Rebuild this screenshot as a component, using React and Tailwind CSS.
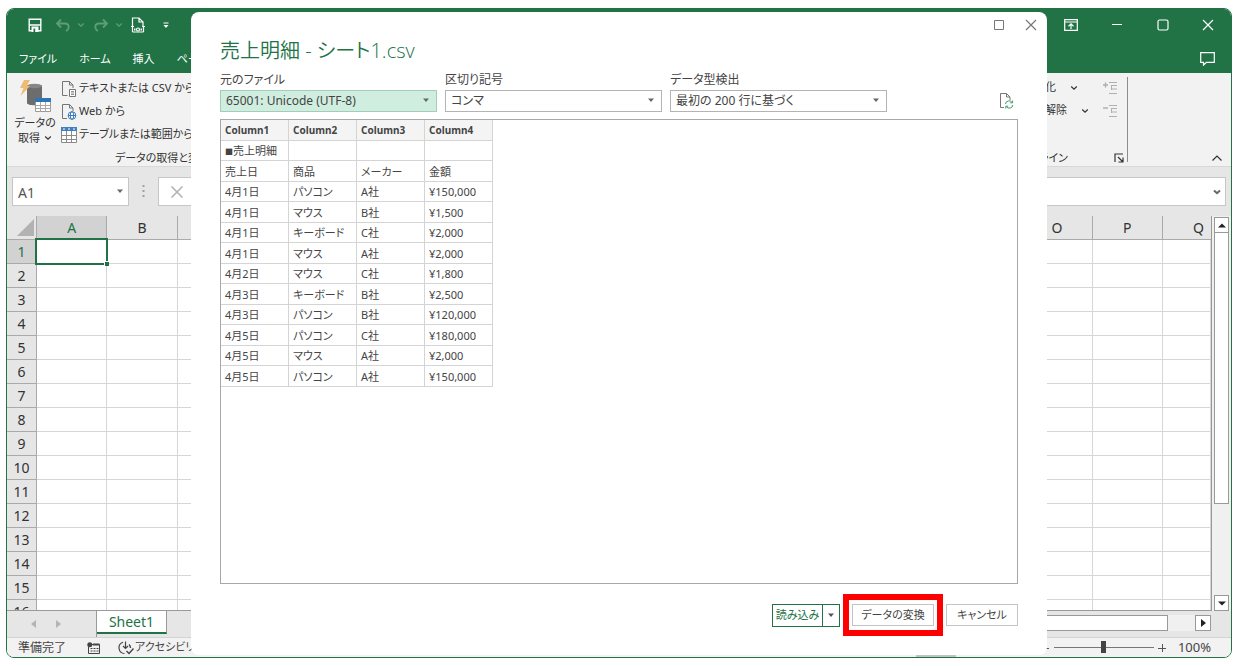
import React from "react";

const LATIN_UI = "font-['Noto_Sans','Noto_Sans_CJK_JP',sans-serif]";

const COLUMNS = "ABCDEFGHIJKLMNOPQ".split("");
const ROWS = Array.from({ length: 16 }, (_, i) => i + 1);

const PREVIEW_HEAD = ["Column1", "Column2", "Column3", "Column4"];
const PREVIEW_ROWS = [
  [
    <React.Fragment key="mark">
      <span className="text-[8px]">■</span>売上明細
    </React.Fragment>,
    "",
    "",
    "",
  ],
  ["売上日", "商品", "メーカー", "金額"],
  ["4月1日", "パソコン", "A社", "¥150,000"],
  ["4月1日", "マウス", "B社", "¥1,500"],
  ["4月1日", "キーボード", "C社", "¥2,000"],
  ["4月1日", "マウス", "A社", "¥2,000"],
  ["4月2日", "マウス", "C社", "¥1,800"],
  ["4月3日", "キーボード", "B社", "¥2,500"],
  ["4月3日", "パソコン", "B社", "¥120,000"],
  ["4月5日", "パソコン", "C社", "¥180,000"],
  ["4月5日", "マウス", "A社", "¥2,000"],
  ["4月5日", "パソコン", "A社", "¥150,000"],
];

function Icon({ w, h, className = "", children }) {
  return (
    <svg
      width={w}
      height={h}
      viewBox={`0 0 ${w} ${h}`}
      fill="none"
      stroke="currentColor"
      aria-hidden="true"
      className={`shrink-0 ${className}`}
    >
      {children}
    </svg>
  );
}

const Chevron = ({ className = "" }) => (
  <Icon w={8} h={6} className={className}>
    <path d="M1.2 1.5 4 4.2 6.8 1.5" strokeWidth="1.2" />
  </Icon>
);

const Triangle = ({ className = "" }) => (
  <Icon w={8} h={5} className={className}>
    <path d="M1 .5h6L4 4z" fill="currentColor" stroke="none" />
  </Icon>
);

function TitleBar() {
  return (
    <div className="flex h-8 items-center bg-[#217346] pl-[21px] pr-[17px] text-white">
      <button aria-label="上書き保存">
        <Icon w={14} h={14}>
          <path d="M1.200 1.200h11.600v11.600H1.200z" strokeWidth="1.400" />
          <path d="M1 7h12" strokeWidth="1.400" />
          <path d="M3.500 8.500h7V14h-7z" fill="currentColor" stroke="none" />
          <path d="M5.500 10.500h1.700V14H5.500z" fill="#217346" stroke="none" />
        </Icon>
      </button>
      <button aria-label="元に戻す" className="ml-[13px] flex items-center gap-1.5 text-[#5f9c7a]">
        <Icon w={16} h={14}>
          <path d="M6 1.500 2 5.500l4 4M2 5.500h8c4.500 0 5 5 1 7.500" strokeWidth="1.800" />
        </Icon>
        <Chevron />
      </button>
      <button aria-label="やり直し" className="ml-2 flex items-center gap-1.5 text-[#5f9c7a]">
        <Icon w={16} h={14}>
          <path d="M10 1.500 14 5.500l-4 4M14 5.500H6c-4.500 0-5 5-1 7.500" strokeWidth="1.800" />
        </Icon>
        <Chevron />
      </button>
      <button aria-label="印刷プレビュー" className="ml-2">
        <Icon w={14} h={16}>
          <path d="M1.500 9V1h6.500l4 4v4M8 1v4h4" strokeWidth="1.200" />
          <path d="M0 9.500h3M11 9.500h3M1.500 15h11M1.500 9.500v5.500M12.500 9.500v5.500" strokeWidth="1.200" />
          <path d="M3 11.500h1.500v2H3zM9.500 11.500H11v2H9.500z" fill="currentColor" stroke="none" />
          <circle cx="7" cy="12.500" r="1.500" strokeWidth="1.200" />
        </Icon>
      </button>
      <button aria-label="クイック アクセスのカスタマイズ" className="ml-[18px]">
        <Icon w={6} h={8}>
          <path d="M.5 2h5" />
          <path d="M.5 4h5L3 7z" fill="currentColor" stroke="none" />
        </Icon>
      </button>
      <div className="ml-auto flex items-center">
        <button aria-label="リボンの表示オプション">
          <Icon w={14} h={12}>
            <path d="M.7.700h12.600v10.600H.7zM.7 3h12.600" strokeWidth="1.200" />
            <path d="M7 10V5M4.500 7.200 7 4.800l2.500 2.400" strokeWidth="1.200" />
          </Icon>
        </button>
        <button aria-label="最小化" className="ml-[33px]">
          <Icon w={12} h={12}>
            <path d="M1 5.500h10" strokeWidth="1.200" />
          </Icon>
        </button>
        <button aria-label="最大化" className="ml-[34px]">
          <Icon w={12} h={12}>
            <rect x="1" y="1" width="10" height="10" rx="1.500" strokeWidth="1.200" />
          </Icon>
        </button>
        <button aria-label="閉じる" className="ml-[33px]">
          <Icon w={12} h={12}>
            <path d="m1 1 10 10M11 1 1 11" strokeWidth="1.200" />
          </Icon>
        </button>
      </div>
    </div>
  );
}

function RibbonTabs() {
  return (
    <nav className="flex h-8 items-center gap-[22px] bg-[#217346] pl-3 pr-4 pt-1 text-[11px] text-white">
      <button className="whitespace-nowrap">ファイル</button>
      <button className="whitespace-nowrap">ホーム</button>
      <button className="whitespace-nowrap">挿入</button>
      <button className="whitespace-nowrap">ページ レイアウト</button>
      <button aria-label="コメント" className="ml-auto">
        <Icon w={15} h={14}>
          <path d="M.7.700h13.600v9.600H6.500L3.500 13v-2.700H.7z" strokeWidth="1.200" />
        </Icon>
      </button>
    </nav>
  );
}

const DatabaseIcon = () => (
  <svg width="34" height="34" viewBox="0 0 34 34" aria-hidden="true">
    <path d="M9 7c0-2.500 15-2.500 15 0v17c0 3-15 3-15 0z" fill="#6d6d6d" />
    <ellipse cx="16.500" cy="7" rx="7.500" ry="2.200" fill="#878787" />
    <path d="M6 1h6L8.500 7H12L2.500 17 5.500 9H2z" fill="#eebb72" />
    <path d="M17.500 19.500h15v13h-15z" fill="#fff" stroke="#9a9a9a" />
    <path d="M17 19h16v4H17z" fill="#2e75b6" />
    <path d="M22.500 23v9.500M27.500 23v9.500M18 26.500h14.500M18 29.500h14.500" stroke="#a8a8a8" />
  </svg>
);

const TextFileIcon = () => (
  <Icon w={16} h={16} className="text-[#757575]">
    <path d="M1.500.500h7l3.500 3.500v3M8.500.500v3.500H12M6.500 14.500h-5V.5" />
    <path d="M8.500 8.500h6v7h-6z" fill="#fff" />
    <path d="M10 10.500h3M10 12h3M10 13.500h3" strokeWidth=".8" />
  </Icon>
);

const WebFileIcon = () => (
  <Icon w={16} h={16} className="text-[#757575]">
    <path d="M1.500.500h7l3.500 3.500v3M8.500.500v3.500H12M6 14.500H1.500V.5" />
    <g stroke="#3a78b8">
      <circle cx="11" cy="11.500" r="3.800" fill="#fff" />
      <ellipse cx="11" cy="11.500" rx="1.700" ry="3.800" />
      <path d="M7.200 11.500h7.600" />
    </g>
  </Icon>
);

const TableIcon = () => (
  <Icon w={16} h={16} className="text-[#8a8a8a]">
    <path d="M.5 1.500h15v14H.5z" fill="#fff" />
    <path d="M5.500 4v11.500M10.500 4v11.500M.5 8.500h15M.5 12.500h15" />
    <path d="M0 0h16v4H0z" fill="#3d80c4" stroke="none" />
    <path d="M2 2h2M7 2h2M12 2h2" stroke="#fff" />
  </Icon>
);

function Ribbon() {
  return (
    <div className="flex h-[93px] bg-[#f2f2f2] text-[11px] text-[#333]">
      <div className="flex shrink-0 flex-col pl-2">
        <div className="flex pt-1">
          <button className="flex w-10 flex-col items-center whitespace-nowrap pt-0.5 leading-[15px]">
            <DatabaseIcon />
            <span className="mt-0.5">データの</span>
            <span className="flex items-center gap-1">
              取得
              <Chevron />
            </span>
          </button>
          <div className="flex flex-col pl-1.5">
            <button className="flex h-[23px] items-center gap-0.5 whitespace-nowrap">
              <TextFileIcon />
              テキストまたは CSV から
            </button>
            <button className="flex h-[23px] items-center gap-0.5 whitespace-nowrap">
              <WebFileIcon />
              Web から
            </button>
            <button className="flex h-[23px] items-center gap-0.5 whitespace-nowrap">
              <TableIcon />
              テーブルまたは範囲から
            </button>
          </div>
        </div>
        <span className="mt-1 pl-[100px] leading-4">データの取得と変換</span>
      </div>

      <div className="ml-auto flex flex-col pr-[3px] pt-[3px]">
        <div className="flex gap-3.5 pr-[7px]">
          <div className="flex flex-col">
            <button className="flex h-[23px] items-center gap-3.5 whitespace-nowrap">
              グループ化
              <Chevron />
            </button>
            <button className="flex h-[23px] items-center gap-3.5 whitespace-nowrap">
              グループ解除
              <Chevron />
            </button>
          </div>
          <div className="flex flex-col text-[#b0b0b0]">
            <button aria-label="詳細データの表示" className="h-[23px]">
              <Icon w={14} h={14}>
                <path d="M0 4h5M2.500 1.500v5" strokeWidth="1.400" />
                <path d="M6 1.500h8M8.500 4.500H14M8.500 8H14M6 12.500h8" strokeWidth="1.200" />
                <path d="M8.500 4v5" />
              </Icon>
            </button>
            <button aria-label="詳細を表示しない" className="h-[23px]">
              <Icon w={14} h={14}>
                <path d="M0 4h5" strokeWidth="1.400" />
                <path d="M6 1.500h8M8.500 4.500H14M8.500 8H14M6 12.500h8" strokeWidth="1.200" />
                <path d="M8.500 4v5" />
              </Icon>
            </button>
          </div>
        </div>
        <div className="mt-auto flex items-center justify-end gap-[46px] pb-px leading-[14px]">
          アウトライン
          <button aria-label="アウトラインの設定">
            <Icon w={10} h={10}>
              <path d="M1 9V1h8M4 4l4.500 4.500M9 4.500V9H4.500" strokeWidth="1.200" />
            </Icon>
          </button>
        </div>
      </div>
      <div className="my-1 flex w-[104px] items-end justify-end border-l border-[#8c8c8c] pr-2">
        <button aria-label="リボンを折りたたむ">
          <Icon w={12} h={8}>
            <path d="m1.500 6.500 4.500-4.500 4.500 4.500" strokeWidth="1.200" />
          </Icon>
        </button>
      </div>
    </div>
  );
}

function FormulaBar() {
  return (
    <div className="flex h-[50px] items-center border-t border-[#d8d8d8] bg-[#e6e6e6] px-[5px]">
      <div className="relative w-[117px]">
        <input
          aria-label="名前ボックス"
          defaultValue="A1"
          className="block h-[29px] w-full border border-[#c6c6c6] bg-white pl-[5px] pt-0.5 text-sm text-[#555]"
        />
        <Triangle className="absolute right-[5px] top-3 text-[#666]" />
      </div>
      <Icon w={3} h={13} className="ml-[13px] text-[#a0a0a0]">
        <path d="M.5 0h2v2h-2zM.5 5h2v2h-2zM.5 10h2v2h-2z" fill="currentColor" stroke="none" />
      </Icon>
      <div className="relative ml-[13px] flex flex-1 items-center border border-[#c6c6c6] bg-white">
        <button aria-label="キャンセル" className="pl-[11px]">
          <Icon w={14} h={12} className="text-[#b4b4b4]">
            <path d="m1.500.500 11 11M12.500.500l-11 11" strokeWidth="1.600" />
          </Icon>
        </button>
        <input aria-label="数式バー" className="h-[27px] min-w-0 flex-1" />
        <Icon w={8} h={6} className="mr-1 text-[#666]">
          <path d="M1 1.500 4 4.200 7 1.500" strokeWidth="2" />
        </Icon>
      </div>
    </div>
  );
}

function Sheet() {
  return (
    <div className="flex min-h-0 flex-1 bg-[#e6e6e6]">
      <div className="min-w-0 flex-1 overflow-hidden border-b border-r border-[#999]">
        <table className="w-full table-fixed border-separate border-spacing-0 bg-white text-sm text-[#333]">
          <thead>
            <tr className="h-6">
              <th className="w-[30px] border-b border-r border-[#aaa] bg-[#e6e6e6] p-0">
                <svg width="18" height="18" viewBox="0 0 18 18" className="ml-[9px]" aria-hidden="true">
                  <path d="M18 0v17H1z" fill="#b2b2b2" />
                </svg>
              </th>
              {COLUMNS.map((c) => (
                <th
                  key={c}
                  scope="col"
                  className={
                    c === "A"
                      ? "border-b border-r border-[#aaa] bg-[#d2d2d2] p-0 font-normal text-[#217346]"
                      : c === "Q"
                        ? "w-[48px] border-b border-[#aaa] bg-[#e6e6e6] p-0 pl-[30px] text-left font-normal"
                        : "border-b border-r border-[#aaa] bg-[#e6e6e6] p-0 font-normal"
                  }
                >
                  {c}
                </th>
              ))}
            </tr>
          </thead>
          <tbody>
            {ROWS.map((r) => (
              <tr key={r} className="h-6">
                <th
                  scope="row"
                  className={
                    r === 1
                      ? "border-b border-r border-[#aaa] bg-[#d2d2d2] p-0 font-normal text-[#217346]"
                      : "border-b border-r border-[#aaa] bg-[#e6e6e6] p-0 font-normal"
                  }
                >
                  {r}
                </th>
                {COLUMNS.map((c) =>
                  r === 1 && c === "A" ? (
                    <td key={c} className="relative z-10 border-b border-r border-[#d6d6d6] p-0">
                      <div className="absolute -inset-0.5 border-2 border-[#217346]" />
                      <span className="absolute -bottom-[3px] -right-[3px] size-[5px] border-l border-t border-white bg-[#217346]" />
                    </td>
                  ) : (
                    <td key={c} className="border-b border-r border-[#d6d6d6] p-0" />
                  ),
                )}
              </tr>
            ))}
          </tbody>
        </table>
      </div>
      <div className="flex w-[19px] flex-col bg-[#f0f0f0] px-0.5 pt-px">
        <button aria-label="上へスクロール" className="flex h-4 items-center justify-center border border-[#999] bg-white">
          <Icon w={8} h={5}>
            <path d="M0 4.500h8L4 .5z" fill="#222" stroke="none" />
          </Icon>
        </button>
        <div className="h-[271px] border border-t-0 border-[#999] bg-white" />
        <button aria-label="下へスクロール" className="mt-auto flex h-4 items-center justify-center border border-[#999] bg-white">
          <Icon w={8} h={5}>
            <path d="M0 .5h8L4 4.500z" fill="#222" stroke="none" />
          </Icon>
        </button>
      </div>
    </div>
  );
}

function SheetTabs() {
  return (
    <div className="flex h-[26px] bg-[#e6e6e6]">
      <div className="flex w-[90px] items-center gap-5 border-r border-[#999] pl-6 text-[#b4b4b4]">
        <button aria-label="前のシート">
          <Icon w={5} h={8}>
            <path d="M5 0v8L0 4z" fill="currentColor" stroke="none" />
          </Icon>
        </button>
        <button aria-label="次のシート">
          <Icon w={5} h={8}>
            <path d="M0 0v8l5-4z" fill="currentColor" stroke="none" />
          </Icon>
        </button>
      </div>
      <button className="mb-[3px] w-[70px] border-b-2 border-r border-b-[#217346] border-r-[#999] bg-white text-sm leading-5 text-[#217346]">
        Sheet1
      </button>
      <div className="ml-auto mr-5 flex items-center pb-0.5">
        <div className="h-4 w-[300px] border border-[#999] bg-white" />
        <div className="h-4 w-[27px] bg-[#f0f0f0]" />
        <button aria-label="右へスクロール" className="flex size-4 items-center justify-center border border-[#999] bg-white">
          <Icon w={5} h={8}>
            <path d="M0 0v8l5-4z" fill="#222" stroke="none" />
          </Icon>
        </button>
      </div>
    </div>
  );
}

function StatusBar() {
  return (
    <div className="flex h-5 items-center border-t border-[#d4d4d4] bg-[#f2f2f2] pl-[11px] text-xs text-[#444]">
      <span>準備完了</span>
      <button aria-label="マクロの記録" className="ml-[21px]">
        <Icon w={13} h={12}>
          <path d="M1.500 5v6.500h11v-9H5" />
          <path d="M6 2.500h6.500" strokeWidth="2" />
          <circle cx="2.800" cy="2.800" r="2.500" fill="currentColor" stroke="none" />
          <path d="M3.500 6.500h8M3.500 9h8" strokeDasharray="2 1" />
        </Icon>
      </button>
      <button className="ml-[18px] flex items-center gap-px whitespace-nowrap text-[11px]">
        <Icon w={16} h={14}>
          <path d="M5 1.200a5.800 5.800 0 0 0 1.500 11.300M7.500.500v7M5 5l2.500 2.500L10 5" strokeWidth="1.200" />
          <path d="M11 3.500a5 5 0 0 1 1.500 3.500M8.500 10l2.500 2.500 4.500-5" strokeWidth="1.400" />
        </Icon>
        アクセシビリティ
      </button>
      <div className="ml-auto flex items-center self-stretch pr-5">
        <button aria-label="標準表示" className="mr-[86px] w-10 self-stretch bg-[#bfc6c2]" />
        <button aria-label="縮小" className="w-3 text-[#555]">
          <Icon w={8} h={8}>
            <path d="M0 4.500h7" />
          </Icon>
        </button>
        <input
          type="range"
          aria-label="ズーム"
          defaultValue={50}
          className="h-3 w-[100px] appearance-none bg-transparent [&::-webkit-slider-runnable-track]:h-px [&::-webkit-slider-runnable-track]:bg-[#777] [&::-webkit-slider-thumb]:-mt-1.5 [&::-webkit-slider-thumb]:h-3 [&::-webkit-slider-thumb]:w-[5px] [&::-webkit-slider-thumb]:appearance-none [&::-webkit-slider-thumb]:bg-[#444]"
        />
        <button aria-label="拡大" className="ml-1 text-[#555]">
          <Icon w={8} h={8}>
            <path d="M0 4.500h8M4.500 0v8" />
          </Icon>
        </button>
        <span className="ml-3 text-[13px]">100%</span>
      </div>
    </div>
  );
}

function Field({ id, label, value, selected }) {
  return (
    <div className="flex w-[217px] flex-col gap-0.5">
      <label htmlFor={id} className="leading-4">
        {label}
      </label>
      <div className="relative">
        <select
          id={id}
          defaultValue={value}
          className={
            selected
              ? "block h-[22px] w-full appearance-none border border-[#a3cdb6] bg-[#d0eedf] pl-[5px] text-xs"
              : "block h-[22px] w-full appearance-none border border-[#b4b4b4] bg-white pl-[5px] text-xs"
          }
        >
          <option>{value}</option>
        </select>
        <Triangle className="pointer-events-none absolute right-[7px] top-2 text-[#666]" />
      </div>
    </div>
  );
}

function ImportDialog() {
  return (
    <section
      role="dialog"
      aria-labelledby="dialog-title"
      className="absolute bottom-0.5 left-[184px] right-[184px] top-[3px] flex flex-col rounded-lg bg-white px-[29px] text-xs text-[#444]"
    >
      <div className="-mr-[19px] flex h-[25px] items-center justify-end gap-5 text-[#777]">
        <button aria-label="最大化">
          <Icon w={12} h={12}>
            <path d="M1.500 1.500h9v9h-9z" />
          </Icon>
        </button>
        <button aria-label="閉じる">
          <Icon w={12} h={12}>
            <path d="m1 1 10 10M11 1 1 11" strokeWidth="1.200" />
          </Icon>
        </button>
      </div>
      <h1
        id="dialog-title"
        className="text-xl font-[350] leading-7 text-[#217346] font-['Open_Sans','Noto_Sans_CJK_JP',sans-serif]"
      >
        売上明細 - シート1.csv
      </h1>
      <div className="mt-[7px] flex items-end gap-2">
        <Field id="origin" label="元のファイル" value="65001: Unicode (UTF-8)" selected />
        <Field id="delimiter" label="区切り記号" value="コンマ" />
        <Field id="detect" label="データ型検出" value="最初の 200 行に基づく" />
        <button aria-label="最新の情報に更新" className="mb-[3px] ml-auto mr-1">
          <Icon w={15} h={16} className="text-[#777]">
            <path d="M5 14.500H1.500V.500h6L11 4v3M7.500.500V4H11" />
            <path
              d="M6.500 11a3.600 3.600 0 0 1 6.600-1.500M13.600 7.500v2.300h-2.400M13.900 12a3.600 3.600 0 0 1-6.600 1.500M6.800 15.500v-2.300h2.400"
              stroke="#3f9a6b"
            />
          </Icon>
        </button>
      </div>
      <div className="mt-[7px] min-h-0 flex-1 overflow-auto border border-[#a8a8a8]">
        <table className="w-[272px] table-fixed border-separate border-spacing-0 text-[11px] leading-4">
          <thead>
            <tr className="h-[21px]">
              {PREVIEW_HEAD.map((h) => (
                <th
                  key={h}
                  scope="col"
                  className="border-b border-r border-[#d4d4d4] bg-[#f4f4f4] py-0 pl-1 pr-0 text-left text-[10px] font-bold"
                >
                  {h}
                </th>
              ))}
            </tr>
          </thead>
          <tbody>
            {PREVIEW_ROWS.map((row, i) => (
              <tr key={i} className="odd:h-5 even:h-[21px]">
                {row.map((cell, j) => (
                  <td key={j} className="whitespace-nowrap border-b border-r border-[#d4d4d4] pb-0 pl-1 pr-0 pt-px">
                    {cell}
                  </td>
                ))}
              </tr>
            ))}
          </tbody>
        </table>
      </div>
      <div className="mb-[19px] mt-2.5 flex h-[42px] items-center justify-end gap-[3px]">
        <div className="flex h-[23px] w-[68px] border border-[#217346] text-[#217346]">
          <button className="flex-1 whitespace-nowrap text-[11px]">読み込み</button>
          <button aria-label="読み込みオプション" className="flex w-[17px] items-center justify-center border-l border-[#217346] text-[#555]">
            <Triangle />
          </button>
        </div>
        <div className="border-6 border-[#fe0000] px-[3px] py-1">
          <button className="block h-[22px] w-[82px] whitespace-nowrap border border-[#c4c4c4] text-[11px]">データの変換</button>
        </div>
        <button className="h-[22px] w-[72px] whitespace-nowrap border border-[#c4c4c4] text-[11px]">キャンセル</button>
      </div>
    </section>
  );
}

export default function App() {
  return (
    <div className={`flex h-screen bg-white px-1.5 py-2 ${LATIN_UI}`}>
      <main className="relative flex min-w-0 flex-1 flex-col overflow-hidden rounded-lg border border-[#217346] [font-feature-settings:'palt']">
        <TitleBar />
        <RibbonTabs />
        <Ribbon />
        <FormulaBar />
        <Sheet />
        <SheetTabs />
        <StatusBar />
        <ImportDialog />
      </main>
    </div>
  );
}
